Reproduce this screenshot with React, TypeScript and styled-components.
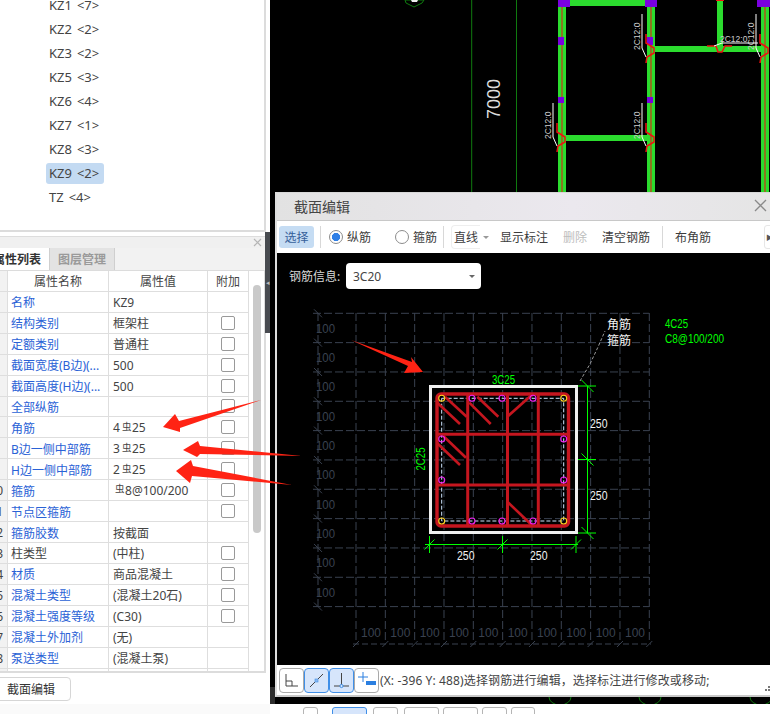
import React from "react";
import styled, { createGlobalStyle } from "styled-components";

const UI_FONT = `"Noto Sans", "Noto Sans CJK SC", sans-serif`;

const GlobalStyle = createGlobalStyle`
  html, body { margin: 0; padding: 0; background: #fff; }
  body { font-family: ${UI_FONT}; color: #333; }
  * { box-sizing: border-box; }
`;

const Page = styled.div`
  position: relative;
  width: 770px;
  height: 714px;
  overflow: hidden;
  display: flex;
  flex-direction: column;
  background: #fafafa;
`;
const Main = styled.div`
  display: flex;
  height: 704px;
  flex: none;
`;
const LeftColumn = styled.aside`
  width: 270px;
  flex: none;
  background: #fff;
  display: flex;
  flex-direction: column;
`;
const ListPane = styled.div`
  height: 232px;
  width: 266px;
  flex: none;
  border-right: 2px solid #dcdcdc;
  border-bottom: 2px solid #dcdcdc;
  overflow: hidden;
  padding-left: 46px;
`;
const ListInner = styled.ul`
  list-style: none;
  margin: -7px 0 0;
  padding: 0;
  display: flex;
  flex-direction: column;
  align-items: flex-start;
`;
const ListItem = styled.li`
  height: 24px;
  display: flex;
  align-items: center;
`;
const ListLabel = styled.span<{ $active?: boolean }>`
  height: 21px;
  padding: 0 3px;
  width: ${(p) => (p.$active ? "58px" : "auto")};
  border-radius: 3px;
  display: flex;
  align-items: center;
  gap: 5px;
  font-size: 13px;
  color: #444;
  white-space: nowrap;
  background: ${(p) => (p.$active ? "#c3daf2" : "transparent")};
`;
const PropertyArea = styled.div`
  flex: 1;
  display: flex;
  min-height: 0;
`;
const PropertyPane = styled.section`
  width: 265px;
  flex: none;
  display: flex;
  flex-direction: column;
  padding-top: 4px;
`;
const SplitterRail = styled.div`
  width: 5px;
  flex: none;
`;
const SplitterGrip = styled.div`
  height: 101px;
  background: #484b50;
  display: flex;
  align-items: center;
  justify-content: center;
  color: #bbb;
  font-size: 7px;
`;
const PaneHeader = styled.div`
  height: 12px;
  flex: none;
  background: #f0f0f0;
  border-top: 1px solid #dddddd;
  display: flex;
  justify-content: flex-end;
  align-items: center;
  padding-right: 3px;
  color: #b5b5b5;
`;
const Tabs = styled.div`
  height: 23px;
  flex: none;
  display: flex;
  background: #f2f2f2;
  border-bottom: 1px solid #dcdcdc;
  overflow: hidden;
`;
const Tab = styled.div<{ $active?: boolean }>`
  width: ${(p) => (p.$active ? "50px" : "65px")};
  flex: none;
  display: flex;
  align-items: center;
  justify-content: ${(p) => (p.$active ? "flex-end" : "center")};
  padding-right: ${(p) => (p.$active ? "8px" : "0")};
  font-size: 12px;
  font-weight: 700;
  white-space: nowrap;
  overflow: hidden;
  color: ${(p) => (p.$active ? "#333" : "#9a9a9a")};
  background: ${(p) => (p.$active ? "#fff" : "#e3e3e3")};
  border-right: 1px solid #cfcfcf;
`;
const TableArea = styled.div`
  height: 402px;
  flex: none;
  width: 266px;
  display: flex;
  overflow: hidden;
  border-right: 2px solid #dcdcdc;
  border-bottom: 2px solid #dcdcdc;
`;
const Table = styled.div`
  width: 249px;
  flex: none;
  display: flex;
  flex-direction: column;
`;
const Row = styled.div`
  display: grid;
  grid-template-columns: 8px 101px 99px 41px;
  height: 20.93px;
  flex: none;
  border-bottom: 1px solid #dedede;
`;
const NumCell = styled.div`
  background: #f2f2f2;
  border-right: 1px solid #dedede;
  overflow: hidden;
  display: flex;
  justify-content: flex-end;
  align-items: center;
  padding: 1px 4px 0 0;
  font-size: 12px;
  color: #444;
`;
const HeadCell = styled.div`
  border-right: 1px solid #dedede;
  display: flex;
  align-items: center;
  justify-content: center;
  padding-top: 1px;
  font-size: 12px;
  color: #444;
`;
const NameCell = styled.div<{ $plain?: boolean }>`
  border-right: 1px solid #dedede;
  display: flex;
  align-items: center;
  padding: 1px 0 0 3px;
  font-size: 12px;
  white-space: nowrap;
  overflow: hidden;
  color: ${(p) => (p.$plain ? "#444" : "#2a62d6")};
`;
const ValueCell = styled.div`
  border-right: 1px solid #dedede;
  display: flex;
  align-items: center;
  padding: 1px 0 0 4px;
  font-size: 12px;
  white-space: nowrap;
  color: #444;
`;
const Rebar = styled.span`
  font-size: 9.5px;
  line-height: 1;
  margin: 0 0.5px 3px 2px;
`;
const CheckCell = styled.div`
  border-right: 1px solid #dedede;
  display: flex;
  align-items: center;
  justify-content: center;
`;
const CheckBox = styled.span`
  width: 14px;
  height: 14px;
  border: 1px solid #999;
  border-radius: 2px;
  background: #fff;
`;
const ScrollTrack = styled.div`
  flex: 1;
  padding: 14px 0 0 4px;
`;
const ScrollThumb = styled.div`
  width: 8px;
  height: 248px;
  border-radius: 4px;
  background: #c9c9c9;
`;
const EditButton = styled.button`
  margin: 4px 0 0 -5px;
  width: 76px;
  height: 24px;
  flex: none;
  padding: 0 4px 0 0;
  background: #fff;
  border: 1px solid #d6d6d6;
  border-radius: 4px;
  font: 12px ${UI_FONT};
  color: #333;
  text-align: center;
`;

const Canvas = styled.main`
  position: relative;
  flex: 1;
  background: #000;
  overflow: hidden;
`;
const CadLayer = styled.svg`
  display: block;
  width: 500px;
  height: 704px;
`;
const Dialog = styled.div`
  position: absolute;
  left: 5px;
  top: 192px;
  right: 0;
  height: 505px;
  display: flex;
  flex-direction: column;
  background: #e6e6e6;
  border-left: 2px solid #dedede;
  border-bottom: 2px solid #c9c9c9;
`;
const TitleBar = styled.div`
  height: 29px;
  flex: none;
  display: flex;
  align-items: center;
  justify-content: space-between;
  padding: 0 3px 2px 17px;
  font-size: 14px;
  color: #444;
  background: linear-gradient(90deg, #e2e2e2, #ebe8ee 60%, #e5e5e5);
  border-top: 1px solid #d8d8d8;
  border-bottom: 1px solid #c8c8c8;
`;
const Toolbar = styled.div`
  height: 32px;
  flex: none;
  display: flex;
  align-items: center;
  background: #fff;
  overflow: hidden;
`;
const SelectButton = styled.div<{ $ml: number }>`
  margin-left: ${(p) => p.$ml}px;
  width: 35px;
  height: 22px;
  flex: none;
  border-radius: 3px;
  background: #c5dcf3;
  color: #35609a;
  font-size: 12px;
  display: flex;
  align-items: center;
  justify-content: center;
`;
const Separator = styled.span<{ $ml: number }>`
  margin-left: ${(p) => p.$ml}px;
  width: 1px;
  height: 22px;
  flex: none;
  background: #d8d8d8;
`;
const Radio = styled.span<{ $ml: number; $checked?: boolean }>`
  margin-left: ${(p) => p.$ml}px;
  width: 14px;
  height: 14px;
  flex: none;
  border-radius: 50%;
  border: 1px solid #8c8c8c;
  background: ${(p) =>
    p.$checked ? "radial-gradient(circle, #2f7fe6 0 3.8px, #fff 4.4px)" : "#fff"};
`;
const ToolText = styled.span<{ $ml: number; $disabled?: boolean }>`
  margin-left: ${(p) => p.$ml}px;
  flex: none;
  font-size: 12px;
  white-space: nowrap;
  color: ${(p) => (p.$disabled ? "#bdbdbd" : "#3c3c3c")};
`;
const LineMode = styled.span<{ $ml: number }>`
  margin-left: ${(p) => p.$ml}px;
  width: 29px;
  height: 24px;
  flex: none;
  display: flex;
  align-items: center;
  padding-left: 2px;
  font-size: 12px;
  color: #3c3c3c;
  border: 1px solid #eeeeee;
  border-right: none;
  border-radius: 4px 0 0 4px;
`;
const SmallCaret = styled.span<{ $ml: number; $color?: string }>`
  margin-left: ${(p) => p.$ml}px;
  flex: none;
  width: 0;
  height: 0;
  border-left: 3px solid transparent;
  border-right: 3px solid transparent;
  border-top: 3px solid ${(p) => p.$color || "#999"};
`;
const OverflowBox = styled.span<{ $ml: number }>`
  margin-left: ${(p) => p.$ml}px;
  width: 20px;
  height: 24px;
  flex: none;
  border: 1px solid #e6e6e6;
  border-radius: 3px;
  display: flex;
  align-items: center;
  padding-left: 1px;
  font-size: 7px;
  color: #555;
`;
const DrawArea = styled.div`
  position: relative;
  flex: 1;
  background: #000;
  min-height: 0;
`;
const SteelRow = styled.div`
  position: absolute;
  left: 12px;
  top: 10px;
  display: flex;
  align-items: center;
  font-size: 12px;
  color: #d8d8d8;
`;
const SteelLabel = styled.span`
  width: 57px;
  flex: none;
`;
const SteelSelect = styled.div`
  width: 135px;
  height: 26px;
  background: #fff;
  border-radius: 4px;
  display: flex;
  align-items: center;
  justify-content: space-between;
  padding: 0 6px 0 7px;
  font-size: 12px;
  color: #444;
`;
const DrawSvg = styled.svg`
  display: block;
  width: 493px;
  height: 412px;
`;
const StatusBar = styled.div`
  position: relative;
  height: 30px;
  flex: none;
  display: flex;
  align-items: center;
  padding-left: 2px;
  background: #fff;
`;
const SnapButton = styled.span<{ $on?: boolean }>`
  width: 25px;
  height: 25px;
  flex: none;
  display: flex;
  align-items: center;
  justify-content: center;
  border-radius: 4px;
  border: 1px solid ${(p) => (p.$on ? "#3f8fe8" : "#a9a9a9")};
  background: ${(p) => (p.$on ? "#d6e5fb" : "#fff")};
`;
const StatusText = styled.span`
  margin-left: 1px;
  font-size: 12px;
  letter-spacing: 0.12px;
  color: #444;
  white-space: nowrap;
`;
const ResizeGrip = styled.svg`
  position: absolute;
  right: 0;
  bottom: 4px;
`;

const BottomStrip = styled.div`
  height: 10px;
  flex: none;
  display: flex;
  overflow: hidden;
  padding-left: 303px;
  background: linear-gradient(90deg, #fafafa 270px, #fff 270px);
`;
const StubButton = styled.span<{ $w: number; $ml: number; $on?: boolean }>`
  width: ${(p) => p.$w}px;
  margin-left: ${(p) => p.$ml}px;
  height: 20px;
  margin-top: 3px;
  flex: none;
  border-radius: 3px;
  border: 1px solid ${(p) => (p.$on ? "#3f8fe8" : "#b5b5b5")};
  background: ${(p) => (p.$on ? "#d6e5fb" : "#fff")};
`;
const ArrowLayer = styled.svg`
  position: absolute;
  left: 0;
  top: 0;
  width: 770px;
  height: 714px;
  pointer-events: none;
`;

const listItems: [string, string][] = [
  ["KZ1", "<7>"], ["KZ2", "<2>"], ["KZ3", "<2>"], ["KZ5", "<3>"], ["KZ6", "<4>"],
  ["KZ7", "<1>"], ["KZ8", "<3>"], ["KZ9", "<2>"], ["TZ", "<4>"],
];

type Prop = { n?: string; name: string; value?: React.ReactNode; check?: boolean; plain?: boolean };
const R = () => <Rebar>虫</Rebar>;
const props: Prop[] = [
  { name: "名称", value: "KZ9" },
  { name: "结构类别", value: "框架柱", check: true },
  { name: "定额类别", value: "普通柱", check: true },
  { name: "截面宽度(B边)(...", value: "500", check: true },
  { name: "截面高度(H边)(...", value: "500", check: true },
  { name: "全部纵筋", check: true },
  { name: "角筋", value: <>4<R />25</>, check: true },
  { name: "B边一侧中部筋", value: <>3<R />25</>, check: true },
  { name: "H边一侧中部筋", value: <>2<R />25</>, check: true },
  { n: "10", name: "箍筋", value: <><R />8@100/200</>, check: true },
  { n: "11", name: "节点区箍筋", check: true },
  { n: "12", name: "箍筋胶数", value: "按截面" },
  { n: "13", name: "柱类型", value: "(中柱)", check: true, plain: true },
  { n: "14", name: "材质", value: "商品混凝土", check: true },
  { n: "15", name: "混凝土类型", value: "(混凝土20石)", check: true },
  { n: "16", name: "混凝土强度等级", value: "(C30)", check: true },
  { n: "17", name: "混凝土外加剂", value: "(无)" },
  { n: "18", name: "泵送类型", value: "(混凝土泵)" },
  { name: "" },
];

const GREEN = "#2bdc2e";
const PURPLE = "#7a00e0";

function CadBackground() {
  const beams = [558, 647, 761];
  return (
    <CadLayer viewBox="270 0 500 704">
      <line x1="471.7" y1="0" x2="471.7" y2="192" stroke="#0f7a0f" />
      <line x1="516.5" y1="0" x2="516.5" y2="192" stroke="#0f7a0f" />
      <polygon points="405,0 406,3 414,7 422,3 424,0" fill="none" stroke="#0f7a0f" />
      <polygon points="411,0 418,0 417,2 412,2" fill="#eee" />
      <text x="0" y="0" transform="translate(500,119) rotate(-90)" fill="#dcdcdc" fontSize="18" fontFamily="Liberation Sans, sans-serif">7000</text>
      {beams.map((x) => (
        <g key={x}>
          <rect x={x} y="0" width="8" height="192" fill={GREEN} />
          <line x1={x + 4} y1="0" x2={x + 4} y2="192" stroke="#f01010" />
        </g>
      ))}
      <rect x="717" y="0" width="6" height="47" fill={GREEN} />
      <rect x="566" y="0" width="81" height="6" fill={GREEN} />
      <rect x="655" y="46" width="106" height="6" fill={GREEN} />
      <rect x="566" y="135" width="81" height="6" fill={GREEN} />
      <rect x="558" y="0" width="12" height="7" fill={PURPLE} />
      <rect x="645" y="0" width="12" height="7" fill={PURPLE} />
      <rect x="757" y="0" width="13" height="7" fill={PURPLE} />
      <rect x="558" y="37" width="6" height="8" fill={PURPLE} />
      <rect x="647" y="37" width="6" height="8" fill={PURPLE} />
      <rect x="558" y="97" width="6" height="6" fill={PURPLE} />
      <rect x="647" y="97" width="6" height="6" fill={PURPLE} />
      <rect x="716" y="0" width="8" height="1" fill="#f01010" />
      {[
        [647, 40], [558, 129], [647, 129], [761, 40],
      ].map(([x, y], i) => (
        <g key={i}>
          <polyline points={`${x - 1},${y - 6} ${x - 1},${y + 3} ${x + 7},${y + 8} ${x + 7},${y + 13} ${x},${y + 17} ${x - 1},${y + 23}`} fill="none" stroke="#f01010" strokeWidth="1.5" />
          <polyline points={`${x - 5},${y - 26} ${x - 5},${y + 8} ${x - 1},${y + 17}`} fill="none" stroke="#fff" strokeWidth="1" />
          <text x="0" y="0" transform={`translate(${x - 7},${y + 10}) rotate(-90)`} fill="#cfcfcf" fontSize="8.5" fontFamily="Liberation Sans, sans-serif">2C12:0</text>
        </g>
      ))}
      <polyline points="707,46 716,46 718,52 722,52 725,46 732,46" fill="none" stroke="#f01010" strokeWidth="1.5" />
      <polyline points="714,46 722,43 758,43" fill="none" stroke="#fff" />
      <text x="720" y="42" fill="#cfcfcf" fontSize="8.5" fontFamily="Liberation Sans, sans-serif">2C12:0</text>
      <rect x="270" y="687" width="5" height="17" fill="#2d2d2d" />
      {[560, 650, 761].map((x) => (
        <path key={x} d={`M${x - 11} 697 A11 8 0 0 0 ${x + 11} 697`} fill="none" stroke="#0f7a0f" />
      ))}
    </CadLayer>
  );
}

const GRID = "#3a4250";
const xs = Array.from({ length: 11 }, (_, i) => 356 + i * 29.33);
const ys = Array.from({ length: 11 }, (_, i) => 313.3 + i * 29.33);
const DIM_GREEN = "#00ff00";
const TEXT_FONT = "Liberation Sans, sans-serif";

function Slash({ x, y, dir = 1, color = DIM_GREEN, r = 6 }: { x: number; y: number; dir?: number; color?: string; r?: number }) {
  return <line x1={x - r} y1={y + dir * r} x2={x + r} y2={y - dir * r} stroke={color} />;
}

function ColumnDrawing() {
  const red = "#c5161f";
  const diagonals = [
    [445, 396.7, 466.7, 416.7], [437.3, 402.7, 460, 424], [469.3, 402.7, 490.7, 424],
    [477.3, 396.7, 498.3, 416.7], [507.3, 416.7, 531.7, 395], [443.3, 436, 466, 457.7],
    [437.3, 443.3, 460, 465], [507.3, 501.7, 531.7, 525],
  ];
  const yellow = [[441.7, 398.3], [563.7, 398.3], [441.7, 521], [563.7, 521]];
  const magenta = [
    [472, 398.3], [502, 398.3], [533, 398.3], [472, 521], [502, 521], [533, 521],
    [441.7, 439], [441.7, 480], [563.7, 439], [563.7, 480],
  ];
  return (
    <DrawSvg viewBox="277 253 493 412">
      {ys.map((y) => (
        <g key={y}>
          <line x1="313" y1={y} x2="649" y2={y} stroke={GRID} strokeDasharray="8 3" />
          <Slash x={318} y={y} dir={-1} color={GRID} r={4} />
        </g>
      ))}
      <line x1="318" y1="313" x2="318" y2="606" stroke={GRID} strokeDasharray="8 3" />
      {xs.map((x) => (
        <g key={x}>
          <line x1={x} y1="313" x2={x} y2="640" stroke={GRID} strokeDasharray="8 3" />
          <Slash x={x} y={644} color={GRID} r={3} />
        </g>
      ))}
      <line x1="353" y1="644" x2="651" y2="644" stroke={GRID} strokeDasharray="6 3" />
      {ys.slice(0, 10).map((y) => (
        <text key={y} x="316" y={y + 19.5} fill="#3a4250" fontSize="12" fontFamily={TEXT_FONT} textLength="19" lengthAdjust="spacingAndGlyphs">100</text>
      ))}
      {xs.slice(0, 10).map((x) => (
        <text key={x} x={x + 5} y="636.5" fill="#3a4250" fontSize="12" fontFamily={TEXT_FONT} textLength="20" lengthAdjust="spacingAndGlyphs">100</text>
      ))}

      <polyline points="580,381 590,364 598,347 605,331" fill="none" stroke="#9a9a9a" strokeDasharray="3 2" />

      <rect x="430.5" y="386.5" width="146" height="146" fill="none" stroke="#f0f0f0" strokeWidth="3" />
      <rect x="441.7" y="398.3" width="122" height="122.7" fill="none" stroke="#cfe6ff" strokeDasharray="4 2" />

      <rect x="437" y="394" width="131.5" height="132" rx="4" fill="none" stroke={red} strokeWidth="3.4" />
      {[467.7, 507.5, 538.3].map((x) => (
        <line key={x} x1={x} y1="394" x2={x} y2="526" stroke={red} strokeWidth="3" />
      ))}
      {[434.3, 485].map((y) => (
        <line key={y} x1="437" y1={y} x2="568" y2={y} stroke={red} strokeWidth="3" />
      ))}
      {diagonals.map((d, i) => (
        <line key={i} x1={d[0]} y1={d[1]} x2={d[2]} y2={d[3]} stroke={red} strokeWidth="2.6" />
      ))}
      {yellow.map(([x, y], i) => (
        <circle key={i} cx={x} cy={y} r="3" fill="none" stroke="#ffd21f" strokeWidth="1.1" />
      ))}
      {magenta.map(([x, y], i) => (
        <circle key={i} cx={x} cy={y} r="3" fill="none" stroke="#f01ef0" strokeWidth="1.1" />
      ))}

      <line x1="425" y1="544.5" x2="578" y2="544.5" stroke={DIM_GREEN} />
      {[429.5, 502.5, 576].map((x) => (
        <g key={x}>
          <line x1={x} y1="536" x2={x} y2="553" stroke={DIM_GREEN} />
          <Slash x={x} y={544.5} r={5} />
        </g>
      ))}
      <line x1="587.5" y1="386" x2="587.5" y2="533" stroke={DIM_GREEN} />
      {[386, 459.5, 533].map((y) => (
        <g key={y}>
          <line x1="578" y1={y} x2="596" y2={y} stroke={DIM_GREEN} />
          <Slash x={587.5} y={y} dir={-1} r={6} />
        </g>
      ))}
      <text x="457" y="560" fill="#f4f4f4" fontSize="12" fontFamily={TEXT_FONT} textLength="17.5" lengthAdjust="spacingAndGlyphs">250</text>
      <text x="530" y="560" fill="#f4f4f4" fontSize="12" fontFamily={TEXT_FONT} textLength="17.5" lengthAdjust="spacingAndGlyphs">250</text>
      <text x="590" y="427.5" fill="#f4f4f4" fontSize="12" fontFamily={TEXT_FONT} textLength="17.5" lengthAdjust="spacingAndGlyphs">250</text>
      <text x="590" y="500" fill="#f4f4f4" fontSize="12" fontFamily={TEXT_FONT} textLength="17.5" lengthAdjust="spacingAndGlyphs">250</text>
      <text x="492" y="383.5" fill={DIM_GREEN} fontSize="12" fontFamily={TEXT_FONT} textLength="23" lengthAdjust="spacingAndGlyphs">3C25</text>
      <text x="0" y="0" transform="translate(425,470.5) rotate(-90)" fill={DIM_GREEN} fontSize="12" fontFamily={TEXT_FONT} textLength="23" lengthAdjust="spacingAndGlyphs">2C25</text>
      <text x="665" y="328" fill={DIM_GREEN} fontSize="12" fontFamily={TEXT_FONT} textLength="23" lengthAdjust="spacingAndGlyphs">4C25</text>
      <text x="665" y="343" fill={DIM_GREEN} fontSize="12" fontFamily={TEXT_FONT} textLength="59" lengthAdjust="spacingAndGlyphs">C8@100/200</text>
      <text x="607" y="329" fill="#f4f4f4" fontSize="12" fontFamily={`"Noto Sans CJK SC", sans-serif`}>角筋</text>
      <text x="607" y="345" fill="#f4f4f4" fontSize="12" fontFamily={`"Noto Sans CJK SC", sans-serif`}>箍筋</text>
    </DrawSvg>
  );
}

function Arrow({ points }: { points: string }) {
  return <polygon points={points} fill="#ff2314" />;
}

export default function App() {
  return (
    <Page>
      <GlobalStyle />
      <Main>
        <LeftColumn>
          <ListPane>
            <ListInner>
              {listItems.map(([k, c]) => (
                <ListItem key={k}>
                  <ListLabel $active={k === "KZ9"}>
                    <span>{k}</span>
                    <span>{c}</span>
                  </ListLabel>
                </ListItem>
              ))}
            </ListInner>
          </ListPane>
          <PropertyArea>
            <PropertyPane>
              <PaneHeader>
                <svg width="9" height="9" viewBox="0 0 9 9">
                  <path d="M1 1 8 8M8 1 1 8" stroke="#b5b5b5" strokeWidth="1.2" />
                </svg>
              </PaneHeader>
              <Tabs>
                <Tab $active>属性列表</Tab>
                <Tab>图层管理</Tab>
              </Tabs>
              <TableArea>
                <Table>
                  <Row>
                    <NumCell />
                    <HeadCell>属性名称</HeadCell>
                    <HeadCell>属性值</HeadCell>
                    <HeadCell>附加</HeadCell>
                  </Row>
                  {props.map((p, i) => (
                    <Row key={i}>
                      <NumCell>{p.n}</NumCell>
                      <NameCell $plain={p.plain}>{p.name}</NameCell>
                      <ValueCell>{p.value}</ValueCell>
                      <CheckCell>{p.check && <CheckBox />}</CheckCell>
                    </Row>
                  ))}
                </Table>
                <ScrollTrack>
                  <ScrollThumb />
                </ScrollTrack>
              </TableArea>
              <EditButton>截面编辑</EditButton>
            </PropertyPane>
            <SplitterRail>
              <SplitterGrip>◂</SplitterGrip>
            </SplitterRail>
          </PropertyArea>
        </LeftColumn>
        <Canvas>
          <CadBackground />
          <Dialog>
            <TitleBar>
              <span>截面编辑</span>
              <svg width="13" height="13" viewBox="0 0 13 13">
                <path d="M1 1 12 12M12 1 1 12" stroke="#8a8a8a" strokeWidth="1.3" />
              </svg>
            </TitleBar>
            <Toolbar>
              <SelectButton $ml={2}>选择</SelectButton>
              <Separator $ml={6} />
              <Radio $ml={8} $checked />
              <ToolText $ml={4}>纵筋</ToolText>
              <Radio $ml={24} />
              <ToolText $ml={4}>箍筋</ToolText>
              <Separator $ml={6} />
              <LineMode $ml={7}>直线</LineMode>
              <SmallCaret $ml={3} />
              <ToolText $ml={11}>显示标注</ToolText>
              <ToolText $ml={15} $disabled>删除</ToolText>
              <ToolText $ml={15}>清空钢筋</ToolText>
              <Separator $ml={12} />
              <ToolText $ml={12}>布角筋</ToolText>
              <OverflowBox $ml={53}>▶</OverflowBox>
            </Toolbar>
            <DrawArea>
              <ColumnDrawing />
              <SteelRow>
                <SteelLabel>钢筋信息:</SteelLabel>
                <SteelSelect>
                  <span>3C20</span>
                  <SmallCaret $ml={0} $color="#666" />
                </SteelSelect>
              </SteelRow>
            </DrawArea>
            <StatusBar>
              <SnapButton>
                <svg width="17" height="17" viewBox="0 0 17 17">
                  <path d="M3 2v12h12M3 9h6v5" fill="none" stroke="#444" />
                </svg>
              </SnapButton>
              <SnapButton $on>
                <svg width="19" height="19" viewBox="0 0 19 19">
                  <path d="M3 16 16 3" stroke="#444" />
                  <rect x="8" y="8" width="3" height="3" fill="#8fb8ee" stroke="#3f8fe8" strokeWidth=".6" />
                </svg>
              </SnapButton>
              <SnapButton $on>
                <svg width="19" height="19" viewBox="0 0 19 19">
                  <path d="M2 15h15M9.5 2v13" stroke="#444" fill="none" />
                  <circle cx="9.5" cy="15" r="1.6" fill="#d6e5fb" stroke="#3f8fe8" />
                </svg>
              </SnapButton>
              <SnapButton>
                <svg width="19" height="19" viewBox="0 0 19 19">
                  <path d="M6 1v10M1 6h10" stroke="#2b7fe0" />
                  <rect x="9" y="10" width="10" height="4" fill="#2b7fe0" />
                </svg>
              </SnapButton>
              <StatusText>(X: -396 Y: 488)选择钢筋进行编辑，选择标注进行修改或移动;</StatusText>
              <ResizeGrip width="5" height="5" viewBox="0 0 5 5">
                <path d="M3 0h2v2H3zM0 3h2v2H0zM3 3h2v2H3z" fill="#777" />
              </ResizeGrip>
            </StatusBar>
          </Dialog>
        </Canvas>
      </Main>
      <BottomStrip>
        <StubButton $ml={0} $w={15} />
        <StubButton $ml={14} $w={35} $on />
        <StubButton $ml={6} $w={25} />
        <StubButton $ml={6} $w={35} />
        <StubButton $ml={4} $w={35} />
        <StubButton $ml={4} $w={25} />
        <StubButton $ml={4} $w={24} />
      </BottomStrip>
      <ArrowLayer viewBox="0 0 770 714">
        <Arrow points="351,340 412,362 411,357 423,372 404,373 408,366" />
        <Arrow points="261,400 179,421 175,414 163,427 180,432 180,428" />
        <Arrow points="302,456 200,446 198,441 183,450 197,457 200,454" />
        <Arrow points="292,485 193,466 191,460 176,471 190,483 192,476" />
      </ArrowLayer>
    </Page>
  );
}
